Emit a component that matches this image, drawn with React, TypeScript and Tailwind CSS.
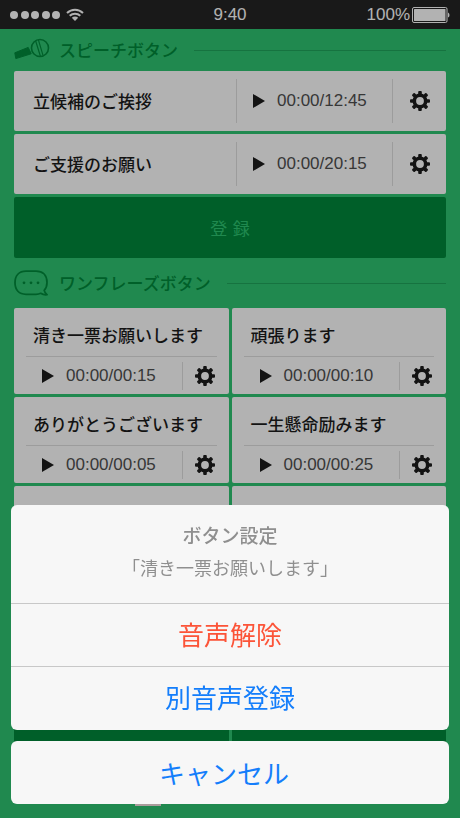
import React from "react";

type Clip = { title: string; time: string };

const speeches: Clip[] = [
  { title: "立候補のご挨拶", time: "00:00/12:45" },
  { title: "ご支援のお願い", time: "00:00/20:15" },
];

const phrases: Clip[] = [
  { title: "清き一票お願いします", time: "00:00/00:15" },
  { title: "頑張ります", time: "00:00/00:10" },
  { title: "ありがとうございます", time: "00:00/00:05" },
  { title: "一生懸命励みます", time: "00:00/00:25" },
];

const teeth = [0, 45, 90, 135, 180, 225, 270, 315];

function GearIcon() {
  return (
    <svg viewBox="0 0 20 20" className="size-5 shrink-0 text-[#1c1c1c]" aria-hidden="true">
      <circle cx="10" cy="10" r="5.7" fill="none" stroke="currentColor" strokeWidth="3.6" />
      {teeth.map((a) => (
        <rect key={a} x="8.200" y="0" width="3.600" height="4" rx="1" fill="currentColor" transform={`rotate(${a} 10 10)`} />
      ))}
    </svg>
  );
}

function PlayButton({ label }: { label: string }) {
  return (
    <button type="button" aria-label={label} className="shrink-0 text-[#1c1c1c]">
      <svg viewBox="0 0 12 14" className="block h-3.5 w-3" aria-hidden="true">
        <path d="M0 0 12 7 0 14Z" fill="currentColor" />
      </svg>
    </button>
  );
}

function MicIcon() {
  return (
    <svg viewBox="0 0 34 26" className="h-[26px] w-[34px] shrink-0 overflow-visible" aria-hidden="true">
      <path d="M0.8 15.8 14.2 10.400 17.2 16.800 1.8 21.600Z" fill="#008a3c" stroke="#008a3c" strokeLinejoin="round" />
      <circle cx="26" cy="11" r="8.500" fill="none" stroke="#008a3c" strokeWidth="1.600" />
      <path d="M21.600 3.800 26.400 19.300M24.400 2.800 29 18.300" fill="none" stroke="#008a3c" strokeWidth="1.200" />
    </svg>
  );
}

function BubbleIcon() {
  return (
    <svg viewBox="0 0 34 26" className="h-[26px] w-[34px] shrink-0" aria-hidden="true">
      <path
        d="M12 1.2H22C29 1.2 33 5.500 33 12.500C33 15.800 32 18.500 30.200 20.400C30.600 22.200 31.500 23.600 33 24.700C30.600 25 28.400 24.400 26.700 23.300C25.300 24 23.700 24.300 22 24.300H12C5 24.300 1 20 1 12.800C1 5.500 5 1.200 12 1.200Z"
        fill="none"
        stroke="#008a3c"
        strokeWidth="1.800"
        strokeLinejoin="round"
      />
      <circle cx="10" cy="12.800" r="1.400" fill="#008a3c" />
      <circle cx="17" cy="12.800" r="1.400" fill="#008a3c" />
      <circle cx="24" cy="12.800" r="1.400" fill="#008a3c" />
    </svg>
  );
}

function StatusBar() {
  return (
    <div className="grid h-[29px] grid-cols-[1fr_auto_1fr] items-center bg-[#242424] px-2.5 font-['Liberation_Sans',sans-serif] text-[17px] leading-none text-white">
      <div className="flex items-center gap-1.5">
        <div className="flex w-[50px] justify-between">
          {[0, 1, 2, 3, 4].map((n) => (
            <span key={n} className="size-2 rounded-full bg-white" />
          ))}
        </div>
        <svg viewBox="0 0 18 13" className="h-[13px] w-[18px]" aria-hidden="true">
          <path d="M1 5C5.500 0.600 12.500 0.600 17 5" fill="none" stroke="white" strokeWidth="2" />
          <path d="M3.700 7.800C6.700 4.900 11.300 4.900 14.300 7.800" fill="none" stroke="white" strokeWidth="2" />
          <path d="M5.800 9.800C7.600 8.100 10.400 8.100 12.200 9.800L9 13Z" fill="white" />
        </svg>
      </div>
      <span>9:40</span>
      <div className="flex items-center justify-end gap-0.5">
        <span>100%</span>
        <svg viewBox="0 0 38 16" className="h-4 w-[38px]" aria-hidden="true">
          <rect x="0.500" y="0.500" width="34.500" height="15" rx="1.500" fill="none" stroke="white" />
          <rect x="2" y="2" width="31.500" height="12" rx="0.500" fill="white" />
          <path d="M36 5.500Q37.500 6 37.500 8T36 10.500Z" fill="white" />
        </svg>
      </div>
    </div>
  );
}

function SectionHeader({ icon, title }: { icon: React.ReactNode; title: string }) {
  return (
    <div className="flex items-center">
      {icon}
      <h2 className="ml-[11px] text-[17px] leading-6 font-medium text-[#008a3c]">{title}</h2>
      <span className="ml-4 h-px flex-1 bg-[#20a55c]" />
    </div>
  );
}

function Time({ value }: { value: string }) {
  return <span className="font-['Liberation_Sans',sans-serif] text-[17px] leading-6 text-[#505050]">{value}</span>;
}

function SpeechRow({ clip }: { clip: Clip }) {
  return (
    <li className="flex h-[60px] items-center rounded-xs bg-white">
      <h3 className="flex-1 pl-[19px] text-[17px] leading-6 font-medium text-[#1c1c1c]">{clip.title}</h3>
      <div className="flex h-11 w-[157px] items-center gap-3 border-x border-[#e0e0e0] pl-4">
        <PlayButton label={`${clip.title}を再生`} />
        <Time value={clip.time} />
      </div>
      <button type="button" aria-label={`${clip.title}の設定`} className="flex w-[53px] justify-center">
        <GearIcon />
      </button>
    </li>
  );
}

function PhraseCard({ clip }: { clip: Clip }) {
  return (
    <li className="h-[86px] rounded-xs bg-white px-3">
      <h3 className="pt-[15px] pb-[9px] pl-[7px] text-[17px] leading-6 font-medium text-[#1c1c1c]">{clip.title}</h3>
      <div className="flex items-center justify-between border-t border-[#e0e0e0] pt-[5px]">
        <div className="flex items-center gap-3 pl-4">
          <PlayButton label={`${clip.title}を再生`} />
          <Time value={clip.time} />
        </div>
        <button type="button" aria-label={`${clip.title}の設定`} className="flex h-7 items-center border-l border-[#e0e0e0] pr-0.5 pl-3">
          <GearIcon />
        </button>
      </div>
    </li>
  );
}

export default function App() {
  return (
    <div className="h-screen overflow-hidden bg-[#2fc572] font-['Noto_Sans_CJK_JP',sans-serif]">
      <StatusBar />
      <main className="px-3.5">
        <section>
          <div className="py-2">
            <SectionHeader icon={<MicIcon />} title="スピーチボタン" />
          </div>
          <ul className="flex flex-col gap-[3px]">
            {speeches.map((clip) => (
              <SpeechRow key={clip.title} clip={clip} />
            ))}
          </ul>
          <button type="button" className="mt-[3px] h-[61px] w-full rounded-xs bg-[#00893c] text-[17px] text-[#2fc572]">
            {"登\u2004録"}
          </button>
        </section>
        <section>
          <div className="py-3">
            <SectionHeader icon={<BubbleIcon />} title="ワンフレーズボタン" />
          </div>
          <ul className="grid grid-cols-2 gap-[3px]">
            {phrases.map((clip) => (
              <PhraseCard key={clip.title} clip={clip} />
            ))}
            {[0, 1, 2, 3].map((n) => (
              <li key={n} className="h-[86px] rounded-xs bg-white" />
            ))}
            {[4, 5].map((n) => (
              <li key={n} className="h-[86px] rounded-xs bg-[#00893c]" />
            ))}
          </ul>
        </section>
        <div className="mt-[50px] ml-[121px] h-1.5 w-[26px] bg-[#f5e0e0]" />
      </main>

      <div className="fixed inset-0 flex flex-col justify-end gap-[11px] bg-black/30 px-[11px] pb-3.5">
        <div role="dialog" aria-labelledby="sheet-title" className="divide-y divide-[#c8c8c8] overflow-hidden rounded-md bg-[#f7f7f7]">
          <div className="pt-[14px] pb-5 text-center text-[#8f8f8f]">
            <h2 id="sheet-title" className="text-[19px] leading-8 font-medium">ボタン設定</h2>
            <p className="text-lg leading-8">「清き一票お願いします」</p>
          </div>
          <button type="button" className="block h-[63px] w-full pb-1 text-[26px] text-[#fc5438]">音声解除</button>
          <button type="button" className="block h-[63px] w-full pb-1 text-[26px] text-[#147efb]">別音声登録</button>
        </div>
        <button type="button" className="h-[63px] w-full rounded-md bg-[#f7f7f7] pr-3 text-[26px] text-[#147efb]">キャンセル</button>
      </div>
    </div>
  );
}
